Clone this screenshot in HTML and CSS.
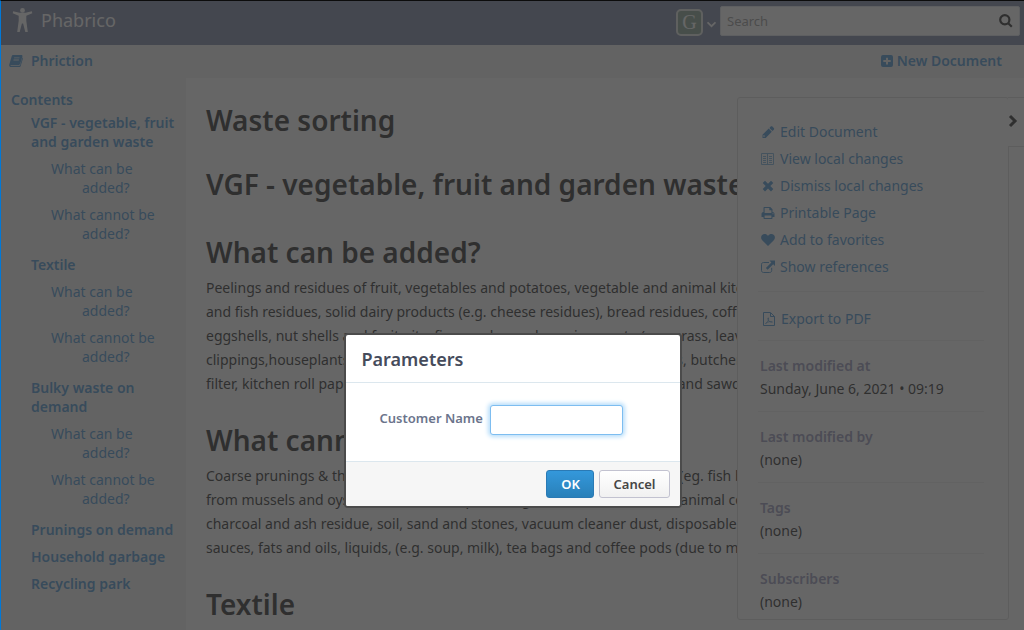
FILE: index.html
```html
<!DOCTYPE html>
<html lang="en">
<head>
<meta charset="utf-8">
<title>Phabrico</title>
<link rel="stylesheet" href="styles.css">
</head>
<body>
<div class="page">
  <header class="topbar">
    <a class="brand" href="#">
      <svg class="brand-icon" viewBox="0 0 20 24" aria-hidden="true"><circle cx="10" cy="2.4" r="2.4"/><path d="M.7 3.300 7 4.800h6l6.300-1.500.5 1.900-6 2.500v5l1.500 11.200h-2.500L10.600 15.500h-1.200L7.200 23.900H4.700l1.500-11.200v-5L.2 5.200z"/></svg>
      <span>Phabrico</span>
    </a>
    <button class="account" type="button" aria-label="Account">
      <span class="avatar">G</span>
      <svg class="caret" viewBox="0 0 8 6" aria-hidden="true"><path d="M.5 1 4 4.500 7.500 1"/></svg>
    </button>
    <form class="search">
      <input type="text" placeholder="Search" aria-label="Search">
      <button type="button" aria-label="Run search"><svg viewBox="0 0 14 14" aria-hidden="true"><circle cx="5.800" cy="5.800" r="4.600"/><path d="m9.200 9.200 3.600 3.600"/></svg></button>
    </form>
  </header>

  <nav class="crumbs">
    <a class="crumb" href="#"><svg class="icon" viewBox="0 0 14 14" aria-hidden="true"><path fill-rule="evenodd" d="M4.300 1h8c.9 0 1.300.6 1.100 1.400l-2.200 7.400c-.2.7-.7 1.100-1.400 1.100H2c-.6 0-.8.9 0 .9h8.200c.6 0 .8-.3 1-.8l2.200-7.400c.5.300.600.700.400 1.300L11.700 12c-.2.700-.8 1.100-1.500 1.100H2C.7 13.100-.1 11.800.3 10.600L2.700 2.300C3 1.400 3.500 1 4.300 1zM5.200 3.500 5 4.300h5.400l.2-.8zM4.600 5.600l-.2.8h5.400l.2-.8z"/></svg><span>Phriction</span></a>
    <a class="new-doc" href="#"><svg class="icon" viewBox="0 0 14 14" aria-hidden="true"><path fill-rule="evenodd" d="M3 1h8a2 2 0 0 1 2 2v8a2 2 0 0 1-2 2H3a2 2 0 0 1-2-2V3a2 2 0 0 1 2-2zm3 2.800V6H3.300v2H6v2.500h2V8h2.700V6H8V3.800z"/></svg><span>New Document</span></a>
  </nav>

  <div class="columns">
    <nav class="toc">
      <a class="toc-title" href="#">Contents</a>
      <ul>
        <li><a href="#">VGF - vegetable, fruit and garden waste</a>
          <ul><li><a href="#">What can be added?</a></li><li><a href="#">What cannot be added?</a></li></ul></li>
        <li><a href="#">Textile</a>
          <ul><li><a href="#">What can be added?</a></li><li><a href="#">What cannot be added?</a></li></ul></li>
        <li><a href="#">Bulky waste on demand</a>
          <ul><li><a href="#">What can be added?</a></li><li><a href="#">What cannot be added?</a></li></ul></li>
        <li><a href="#">Prunings on demand</a></li>
        <li><a href="#">Household garbage</a></li>
        <li><a href="#">Recycling park</a></li>
      </ul>
    </nav>

    <main class="document">
      <h1>Waste sorting</h1>
      <h1>VGF - vegetable, fruit and garden waste</h1>
      <h2>What can be added?</h2>
      <p>Peelings and residues of fruit, vegetables and potatoes, vegetable and animal kitchen<br>
      and fish residues, solid dairy products (e.g. cheese residues), bread residues, coffee<br>
      eggshells, nut shells and fruit pits, fine garden and pruning waste (e.g. grass, leaves<br>
      clippings,houseplants, cut flowers, untreated wood shavings, small parts, butcher<br>
      filter, kitchen roll paper, small quantities of wood chips, coarse shavings and sawdust</p>
      <h2>What cannot be added?</h2>
      <p>Coarse prunings &amp; thick branches, big bones and other animal residues (eg. fish bones<br>
      from mussels and oysters, meat waste, plastics, glass, metal, textile and animal corpses<br>
      charcoal and ash residue, soil, sand and stones, vacuum cleaner dust, disposable<br>
      sauces, fats and oils, liquids, (e.g. soup, milk), tea bags and coffee pods (due to microplastics</p>
      <h2>Textile</h2>
    </main>

    <aside class="side">
      <button class="side-toggle" type="button" aria-label="Collapse panel"><svg viewBox="0 0 10 14" aria-hidden="true"><path d="m2 2 5 5-5 5"/></svg></button>
      <div class="panel">
        <ul class="actions">
          <li><a href="#"><svg class="icon" viewBox="0 0 14 14" aria-hidden="true"><path fill-rule="evenodd" d="M9.700 1.600c.5-.5 1.200-.5 1.700 0l1.400 1.400c.5.500.5 1.200 0 1.700l-1.300 1.300-3.100-3.100zM7.700 3.600l3.100 3.100L4.700 12.900H1.500V9.700zM2.900 10l-.6.700v1.100h1.100l.6-.7z"/></svg>Edit Document</a></li>
          <li><a href="#"><svg class="icon outline thin" viewBox="0 0 14 14" aria-hidden="true"><path d="M.5 1.500h12v11H.5zM6.500 1v12M2 4.500h3M2 6.500h3M2 8.500h3M2 10.500h3M8 4.500h3M8 6.500h3M8 8.500h3M8 10.500h3"/></svg>View local changes</a></li>
          <li><a href="#"><svg class="icon" viewBox="0 0 14 14" aria-hidden="true"><path d="m4 1.800 3 3 3-3L12.300 4.100l-3 3 3 3L10 12.400l-3-3-3 3-2.300-2.300 3-3-3-3z"/></svg>Dismiss local changes</a></li>
          <li><a href="#"><svg class="icon" viewBox="0 0 14 14" aria-hidden="true"><path fill-rule="evenodd" d="M2.500 6V2c0-.6.400-1 1-1h5.800L11.500 3.200V6c1.200 0 2 .8 2 2v3h-2v1c0 .6-.4 1-1 1h-7c-.6 0-1-.4-1-1v-1h-2V8c0-1.200.8-2 2-2zM3.600 2.100v4.900h6.800V4.200H8.300V2.100zM3.600 9.500v2.400h6.800V9.500zM11.500 7.300v1h1v-1z"/></svg>Printable Page</a></li>
          <li><a href="#"><svg class="icon" viewBox="0 0 14 14" aria-hidden="true"><path d="M7 13 1.200 7.300C-.3 5.700-.2 3.300 1.100 2.100 2.800.500 5.600.900 7 3c1.400-2.100 4.200-2.500 5.900-.9 1.300 1.200 1.400 3.600-.1 5.200z"/></svg>Add to favorites</a></li>
          <li><a href="#"><svg class="icon" viewBox="0 0 14 14" aria-hidden="true"><path d="M8.500.500H14V6l-1.800-1.800-5.600 5.600-1.700-1.700 5.500-5.600z"/><path class="stroke" d="M8 2.500H2.500c-1.100 0-2 .7-2 1.800v6.200c0 1.200.9 2 2 2h6.200c1.200 0 2-.8 2-2V7.800"/></svg>Show references</a></li>
        </ul>
        <ul class="actions">
          <li><a href="#"><svg class="icon outline" viewBox="0 0 14 14" aria-hidden="true"><path d="M1.500.500h7l4 4v9h-11zM8.500 1v3.500h4"/><path class="thin" d="M3.500 11.500c2-1 3.500-3.500 3-5.500-.6-.8-1 .5-.4 1.700.8 1.800 2.400 2.800 4.400 2.300-2-.9-4.500-.3-7 1.500"/></svg>Export to PDF</a></li>
        </ul>
        <dl><dt>Last modified at</dt><dd>Sunday, June 6, 2021 • 09:19</dd></dl>
        <dl><dt>Last modified by</dt><dd>(none)</dd></dl>
        <dl><dt>Tags</dt><dd>(none)</dd></dl>
        <dl><dt>Subscribers</dt><dd>(none)</dd></dl>
      </div>
    </aside>
  </div>
</div>

<div class="overlay">
  <form class="dialog" role="dialog" aria-labelledby="dialog-title">
    <h3 id="dialog-title">Parameters</h3>
    <div class="dialog-body">
      <label for="customer">Customer Name</label>
      <input id="customer" type="text">
    </div>
    <div class="dialog-footer">
      <button class="ok" type="button">OK</button>
      <button class="cancel" type="button">Cancel</button>
    </div>
  </form>
</div>
</body>
</html>
```

FILE: styles.css
```css
* { box-sizing: border-box; }

body {
  margin: 0;
  height: 100vh;
  overflow: hidden;
  border-top: 1px solid #0c0c0c;
  border-left: 1px solid #0078d7;
  background: #fff;
  color: #272727;
  font: 14px/19px "Noto Sans", sans-serif;
}

a { color: #4793d3; text-decoration: none; }
ul, dl, dd { margin: 0; padding: 0; list-style: none; }
button, input { font: inherit; }
svg { display: block; fill: currentColor; }

.page { display: flex; flex-direction: column; min-height: 100%; }

.topbar {
  display: flex;
  align-items: flex-start;
  height: 44px;
  padding: 5px 4px 0 11px;
  background: #7783a3;
}
.brand {
  display: flex;
  align-items: center;
  gap: 8px;
  margin: 2px auto 0 0;
  color: #fff;
  font-size: 18px;
  line-height: 24px;
}
.brand-icon { width: 21px; height: 24px; }
.account {
  display: flex;
  align-items: center;
  gap: 4px;
  margin: 3px 4px 0 0;
  padding: 0;
  border: 0;
  background: none;
  color: #fff;
}
.avatar {
  width: 27px;
  height: 27px;
  border: 2px solid #e4e8e4;
  border-radius: 5px;
  background: #83a18f;
  font: 20px/23px "Liberation Serif", serif;
  text-align: center;
}
.caret { width: 9px; height: 7px; margin-top: 4px; fill: none; stroke: currentColor; stroke-width: 1.5; }
.search {
  display: flex;
  align-items: center;
  width: 300px;
  height: 30px;
  padding: 0 6px;
  border: 1px solid #dde2ea;
  border-radius: 2px;
  background: #fff;
}
.search input { flex: 1; min-width: 0; padding: 0; border: 0; background: none; outline: 0; font-size: 13px; }
.search input::placeholder { color: #979797; }
.search button { padding: 0; border: 0; background: none; color: #272727; }
.search svg { width: 14px; height: 14px; fill: none; stroke: currentColor; stroke-width: 2.2; }

.crumbs {
  display: flex;
  justify-content: space-between;
  align-items: center;
  height: 33px;
  padding: 0 22px 2px 8px;
  background: #f3f3f3;
  font-weight: 600;
}
.crumbs a { display: flex; align-items: center; }
.crumb { gap: 8px; }
.new-doc { gap: 3px; }
.icon { flex: none; width: 14px; height: 14px; }
.icon.outline, .stroke { fill: none; stroke: currentColor; }
.thin { opacity: .7; }

.columns { display: flex; flex: 1; }

.toc { flex: none; width: 185px; padding: 12px 10px; background: #f3f3f3; }
.toc-title { display: block; font-weight: 600; }
.toc a { display: block; }
.toc > ul { padding-left: 20px; }
.toc > ul > li { padding: 4px 0; font-weight: 600; }
.toc > ul > li > ul { padding: 8px 0 4px 51px; font-weight: 400; }
.toc ul ul li + li { padding-top: 8px; }
.toc ul ul a { text-indent: -31px; }

.document { flex: 1; min-width: 0; overflow: hidden; padding: 20px 0 0 20px; white-space: nowrap; }
.document h1, .document h2 { margin: 0; font-size: 28px; line-height: 44px; font-weight: 600; }
.document h1 { margin-bottom: 20px; }
.document h2 { margin-top: 24px; }
.document p { margin: 0 0 -2px; padding-top: 2px; line-height: 24px; }

.side { position: relative; flex: none; width: 287px; padding: 19px 15px 0 0; }
.panel { height: 523px; padding: 20px 24px 0 20px; border: 1px solid #dadada; border-radius: 3px; }
.side-toggle {
  position: absolute;
  top: 19px;
  right: 0;
  width: 16px;
  height: 50px;
  padding: 0 0 2px;
  border: 1px solid #dadada;
  border-width: 1px 0;
  background: #fff;
  color: #272727;
}
.side-toggle svg { width: 10px; height: 14px; fill: none; stroke: currentColor; stroke-width: 3; }
.actions { padding: 0 4px 11px 3px; border-bottom: 1px solid #eee; }
.actions + .actions { padding: 13px 4px 8px; }
.actions a { display: flex; align-items: center; gap: 5px; line-height: 27px; }
.panel dl { padding: 13px 2px 11px; border-bottom: 1px solid #eee; line-height: 23px; }
.panel dl:last-child { border: 0; }
.panel dt { color: #9797bb; font-weight: 600; }

.overlay {
  position: fixed;
  inset: 1px 0 0 1px;
  display: flex;
  justify-content: center;
  align-items: flex-start;
  padding-top: 332px;
  background: rgba(51, 51, 51, .75);
}
.dialog { width: 338px; overflow: hidden; border: 2px solid #4b4b4b; border-radius: 4px; background: #fff; }
.dialog h3 {
  margin: 0;
  padding: 12px 16px 11px;
  border-bottom: 1px solid #dce7ee;
  color: #464c5c;
  font-size: 18px;
  line-height: 24px;
  font-weight: 600;
}
.dialog-body { display: flex; align-items: flex-start; gap: 7px; padding: 22px 34px 26px; }
.dialog-body label { color: #6b748c; font-size: 13px; line-height: 26px; font-weight: 600; }
.dialog-body input {
  width: 133px;
  height: 30px;
  border: 1px solid #7dbdf0;
  border-radius: 3px;
  outline: 0;
  box-shadow: 0 0 4px 2px #b8defa;
}
.dialog-footer {
  display: flex;
  justify-content: flex-end;
  gap: 5px;
  padding: 8px 10px;
  border-top: 1px solid #dce7ee;
  background: #f6f6f6;
}
.dialog-footer button { height: 28px; padding: 0 13px; border: 1px solid #c2c2d0; border-radius: 3px; font-size: 13px; font-weight: 600; line-height: 18px; }
.dialog-footer .ok { min-width: 48px; border-color: #2a7ab5; background: linear-gradient(#3498db, #2980b9); color: #fff; }
.dialog-footer .cancel { background: linear-gradient(#fff, #f1f1f1); color: #464646; }
```
